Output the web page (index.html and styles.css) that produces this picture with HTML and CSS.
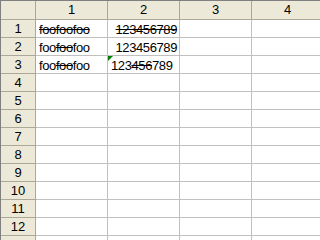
FILE: index.html
```html
<!DOCTYPE html>
<html lang="en">
<head>
    <meta charset="UTF-8">
    <title>Sheet1</title>
    <link rel="stylesheet" href="styles.css">
</head>
<body>
    <div class="sheet">
        <div class="corner"></div>
        <div class="col-head">1</div>
        <div class="col-head">2</div>
        <div class="col-head">3</div>
        <div class="col-head">4</div>

        <div class="row-head">1</div>
        <div class="cell"><s>foofoofoo</s></div>
        <div class="cell num"><s>123456789</s></div>
        <div class="cell"></div>
        <div class="cell"></div>

        <div class="row-head">2</div>
        <div class="cell">foo<s>foo</s>foo</div>
        <div class="cell num">123456789</div>
        <div class="cell"></div>
        <div class="cell"></div>

        <div class="row-head">3</div>
        <div class="cell">foo<s>foo</s>foo</div>
        <div class="cell flagged">123<s>456</s>789</div>
        <div class="cell"></div>
        <div class="cell"></div>

        <div class="row-head">4</div><div class="cell"></div><div class="cell"></div><div class="cell"></div><div class="cell"></div>
        <div class="row-head">5</div><div class="cell"></div><div class="cell"></div><div class="cell"></div><div class="cell"></div>
        <div class="row-head">6</div><div class="cell"></div><div class="cell"></div><div class="cell"></div><div class="cell"></div>
        <div class="row-head">7</div><div class="cell"></div><div class="cell"></div><div class="cell"></div><div class="cell"></div>
        <div class="row-head">8</div><div class="cell"></div><div class="cell"></div><div class="cell"></div><div class="cell"></div>
        <div class="row-head">9</div><div class="cell"></div><div class="cell"></div><div class="cell"></div><div class="cell"></div>
        <div class="row-head">10</div><div class="cell"></div><div class="cell"></div><div class="cell"></div><div class="cell"></div>
        <div class="row-head">11</div><div class="cell"></div><div class="cell"></div><div class="cell"></div><div class="cell"></div>
        <div class="row-head">12</div><div class="cell"></div><div class="cell"></div><div class="cell"></div><div class="cell"></div>
        <div class="row-head"></div><div class="cell"></div><div class="cell"></div><div class="cell"></div><div class="cell"></div>
    </div>
</body>
</html>
```

FILE: styles.css
```css
body {
    margin: 0;
    background-color: #ffffff;
    overflow: hidden;
    font-family: 'Liberation Sans', Arial, sans-serif;
}

.sheet {
    display: grid;
    grid-template-columns: 35px repeat(4, 72px);
    grid-template-rows: 19px repeat(13, 18px);
    border-top: 1px solid #808080;
    border-left: 1px solid #808080;
    width: 319px;
    height: 239px;
    overflow: hidden;
}

.corner,
.col-head,
.row-head {
    background-color: #ece9d8;
    border-right: 1px solid #aca899;
    border-bottom: 1px solid #aca899;
    color: #000000;
    font-size: 13px;
    text-align: center;
}

.col-head {
    line-height: 18px;
}

.row-head {
    padding-top: 1px;
    line-height: 16px;
}

.cell {
    position: relative;
    border-right: 1px solid #c0c0c0;
    border-bottom: 1px solid #c0c0c0;
    padding: 2px 2px 0 3px;
    font-size: 13px;
    letter-spacing: -0.4px;
    line-height: 15px;
    color: #000000;
    white-space: nowrap;
}

.num {
    text-align: right;
}

/* little green marker for numbers stored as text */
.flagged::before {
    content: "";
    position: absolute;
    top: 0;
    left: 0;
    border-top: 5px solid #008000;
    border-right: 5px solid transparent;
}
```
